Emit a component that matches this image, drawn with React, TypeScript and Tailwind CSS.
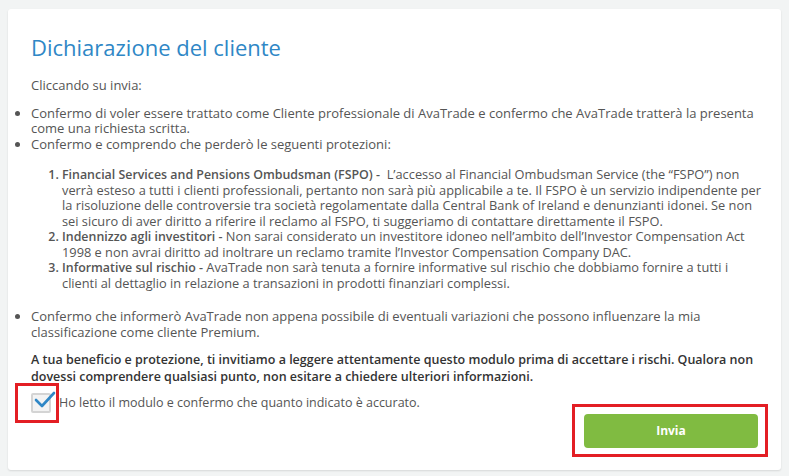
const App = () => {
  return (
    <div
      className="w-[789px] h-[476px] bg-[#f2f4f4] pt-[9px] px-[8px] overflow-hidden"
      style={{ fontFamily: '"Open Sans", "Noto Sans", sans-serif' }}
    >
      <div className="bg-white rounded-[3px] shadow-[0_1px_2px_rgba(0,0,0,0.12)] h-[461px] pl-[23px] pr-[16px] pt-[24px] text-[13px] leading-[15.5px] text-[#555]">
        <h1 className="text-[22px] leading-[28px] text-[#2f87c6] font-normal">
          Dichiarazione del cliente
        </h1>

        <p className="mt-[17px]">Cliccando su invia:</p>

        <ul className="list-disc mt-[12px] pl-0 ml-0">
          <li>
            Confermo di voler essere trattato come Cliente professionale di AvaTrade e confermo che AvaTrade tratterà la presenta come una richiesta scritta.
          </li>
          <li>
            Confermo e comprendo che perderò le seguenti protezioni:
            <ol className="list-decimal pl-[31px] mt-[15px] text-[12.8px] marker:font-semibold marker:text-[12.4px]">
              <li>
                <b className="font-semibold text-[12.4px]">Financial Services and Pensions Ombudsman (FSPO) -</b>&nbsp; L’accesso al Financial Ombudsman Service (the “FSPO”) non verrà esteso a tutti i clienti professionali, pertanto non sarà più applicabile a te. Il FSPO è un servizio indipendente per la risoluzione delle controversie tra società regolamentate dalla Central Bank of Ireland e denunzianti idonei. Se non sei sicuro di aver diritto a riferire il reclamo al FSPO, ti suggeriamo di contattare direttamente il FSPO.
              </li>
              <li>
                <b className="font-semibold text-[12.4px]">Indennizzo agli investitori -</b> Non sarai considerato un investitore idoneo nell’ambito dell’Investor Compensation Act 1998 e non avrai diritto ad inoltrare un reclamo tramite l’Investor Compensation Company DAC.
              </li>
              <li>
                <b className="font-semibold text-[12.4px]">Informative sul rischio -</b> AvaTrade non sarà tenuta a fornire informative sul rischio che dobbiamo fornire a tutti i clienti al dettaglio in relazione a transazioni in prodotti finanziari complessi.
              </li>
            </ol>
          </li>
          <li className="mt-[18px]">
            Confermo che informerò AvaTrade non appena possibile di eventuali variazioni che possono influenzare la mia classificazione come cliente Premium.
          </li>
        </ul>

        <p className="mt-[11px] font-semibold text-[#333] text-[12.5px] leading-[17px]">
          A tua beneficio e protezione, ti invitiamo a leggere attentamente questo modulo prima di accettare i rischi. Qualora non dovessi comprendere qualsiasi punto, non esitare a chiedere ulteriori informazioni.
        </p>

        <div className="mt-[8px] flex items-center text-[12.5px]">
          <div className="relative w-[28px] h-[20px]">
            <div className="absolute left-0 top-0 w-[20px] h-[20px] border-2 border-[#d4d4d4] bg-[#f3f3f3] rounded-[2px]" />
            <svg className="absolute left-[3px] top-[-3px]" width="22" height="20" viewBox="0 0 22 20">
              <path d="M2 10 L8 16 L20 3" fill="none" stroke="#2f87c6" strokeWidth="2.6" strokeLinecap="round" strokeLinejoin="round" />
            </svg>
            <div className="absolute left-[-16px] top-[-10px] w-[44px] h-[40px] border-[3px] border-[#e31e24]" />
          </div>
          <span>Ho letto il modulo e confermo che quanto indicato è accurato.</span>
        </div>

        <div className="flex justify-end mt-[1px] pr-[7px]">
          <div className="relative">
            <button className="w-[174px] h-[34px] rounded-[4px] bg-[#80bb41] text-white font-bold text-[12px]">
              Invia
            </button>
            <div className="absolute left-[-12px] top-[-10px] right-[-10px] bottom-[-9px] border-[3px] border-[#e31e24]" />
          </div>
        </div>
      </div>
    </div>
  );
};

export default App;
